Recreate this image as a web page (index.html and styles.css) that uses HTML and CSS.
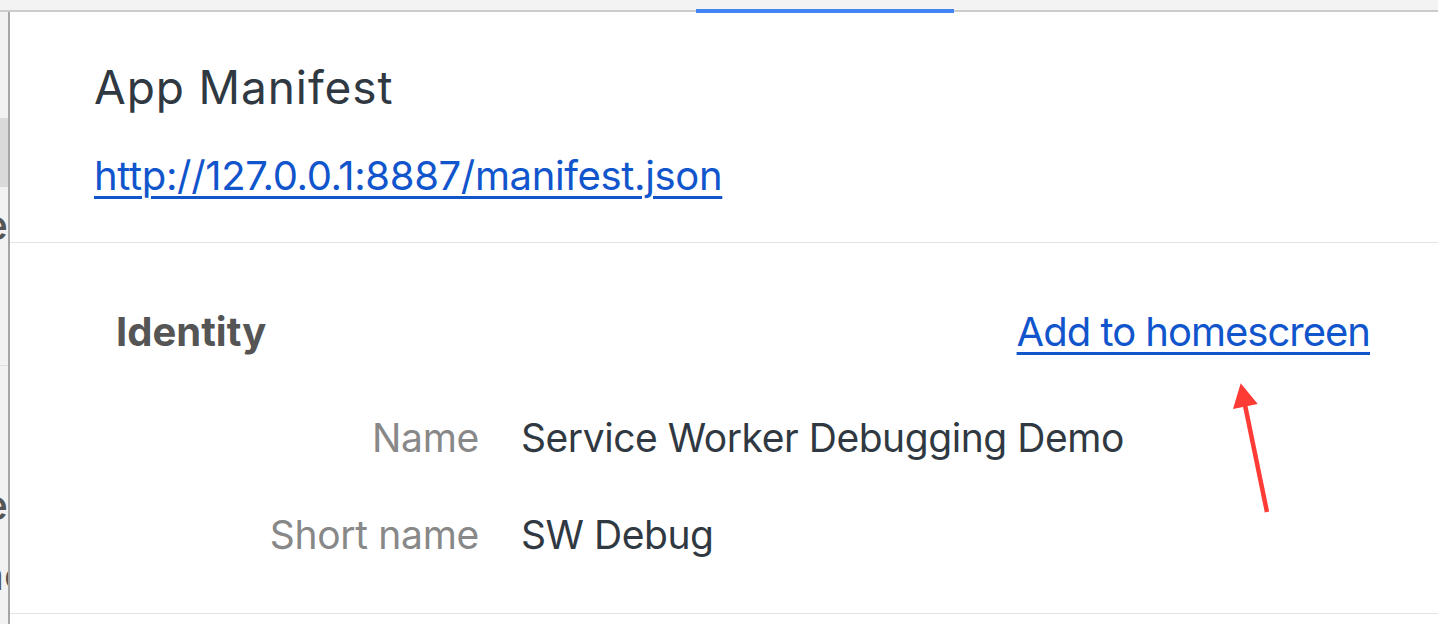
FILE: index.html
```html
<!DOCTYPE html>
<html lang="en">
<head>
<meta charset="utf-8">
<title>App Manifest</title>
<link rel="stylesheet" href="styles.css">
</head>
<body>
<div class="app">
  <div class="tabbar">
    <div class="tab-indicator"></div>
  </div>
  <div class="workspace">
    <aside class="sidebar">
      <div class="side-selected"></div>
      <div class="side-row first"><span class="side-text">Clear storage</span></div>
      <div class="side-sep"></div>
      <div class="side-row second"><span class="side-text">Storage</span></div>
      <div class="side-row third"><span class="side-text cut">Bounce</span></div>
    </aside>
    <main class="panel">
      <section class="manifest-header">
        <h1 class="title">App Manifest</h1>
        <a class="link manifest-url" href="#">http://127.0.0.1:8887/manifest.json</a>
      </section>
      <section class="identity">
        <div class="section-head">
          <h2 class="section-title">Identity</h2>
          <a class="link add-home" href="#">Add to homescreen</a>
        </div>
        <div class="fields">
          <div class="field-label">Name</div>
          <div class="field-value">Service Worker Debugging Demo</div>
          <div class="field-label">Short name</div>
          <div class="field-value">SW Debug</div>
        </div>
      </section>
    </main>
  </div>
  <svg class="annotation" width="60" height="150" viewBox="0 0 60 150" aria-hidden="true">
    <line x1="20" y1="30" x2="42" y2="137" stroke="#ff3b36" stroke-width="4.5" stroke-linecap="butt"/>
    <polygon points="15.7,8.3 8,34 32.7,29" fill="#ff3b36"/>
  </svg>
</div>
</body>
</html>
```

FILE: styles.css
```css
* { box-sizing: border-box; }

html, body {
  margin: 0;
  padding: 0;
  background: #ffffff;
}

body {
  font-family: "Inter", "Liberation Sans", sans-serif;
  width: 1438px;
  height: 624px;
  overflow: hidden;
}

.app {
  position: relative;
  width: 1438px;
  height: 624px;
  display: flex;
  flex-direction: column;
}

.tabbar {
  height: 12px;
  flex: 0 0 12px;
  background: #f3f3f3;
  border-bottom: 2px solid #cccccc;
  display: flex;
  align-items: flex-end;
  padding-left: 696px;
}

.tab-indicator {
  position: relative;
  z-index: 1;
  width: 258px;
  height: 4px;
  margin-bottom: -3px;
  background: #4285f4;
}

.workspace {
  flex: 1;
  display: flex;
  min-height: 0;
}

.sidebar {
  flex: 0 0 10px;
  width: 10px;
  background: #f2f2f2;
  border-right: 2px solid #a6a6a6;
  overflow: hidden;
  display: flex;
  flex-direction: column;
  padding-top: 106px;
}

.side-selected {
  height: 69px;
  flex: 0 0 69px;
  background: #dadada;
}

.side-row {
  height: 48px;
  flex: 0 0 48px;
  display: flex;
  justify-content: flex-end;
  font-size: 42px;
  line-height: 48px;
  font-weight: 500;
  color: #555555;
  white-space: nowrap;
}

.side-row.first { margin-top: 14px; }
.side-row.second { margin-top: 115px; }
.side-row.third { margin-top: 22px; }

.side-text.cut { margin-right: -45px; }

.side-sep {
  height: 1px;
  flex: 0 0 1px;
  margin-top: 116px;
  background: #e0e0e0;
}

.panel {
  flex: 1;
  min-width: 0;
  display: flex;
  flex-direction: column;
}

.manifest-header {
  padding: 48px 0 42px 85px;
  border-bottom: 1px solid #e3e3e3;
  display: flex;
  flex-direction: column;
  align-items: flex-start;
}

.title {
  margin: 0 0 0 -1px;
  font-size: 46px;
  line-height: 54px;
  font-weight: 400;
  letter-spacing: 0.9px;
  color: #303942;
}

.link {
  color: #1155cc;
  text-decoration: underline;
  text-underline-offset: 6px;
  text-decoration-thickness: 3px;
}

.manifest-url {
  margin-top: 38px;
  margin-left: -1px;
  font-size: 40px;
  line-height: 48px;
  letter-spacing: -0.35px;
}

.identity {
  padding: 65px 68px 54px 106px;
  border-bottom: 1px solid #e3e3e3;
}

.section-head {
  display: flex;
  justify-content: space-between;
  align-items: baseline;
}

.section-title {
  margin: 0;
  font-size: 40px;
  line-height: 48px;
  font-weight: 700;
  color: #555555;
}

.add-home {
  font-size: 40px;
  line-height: 48px;
  letter-spacing: -1px;
}

.fields {
  margin-top: 58px;
  display: grid;
  grid-template-columns: 362px 1fr;
  column-gap: 44px;
  row-gap: 49px;
  font-size: 39px;
  line-height: 48px;
}

.field-label {
  text-align: right;
  color: #888888;
  letter-spacing: -0.3px;
  margin-right: -1px;
}

.field-value {
  color: #303942;
  letter-spacing: -0.45px;
  margin-left: -1px;
}

.annotation {
  position: absolute;
  left: 1225px;
  top: 375px;
}
```
